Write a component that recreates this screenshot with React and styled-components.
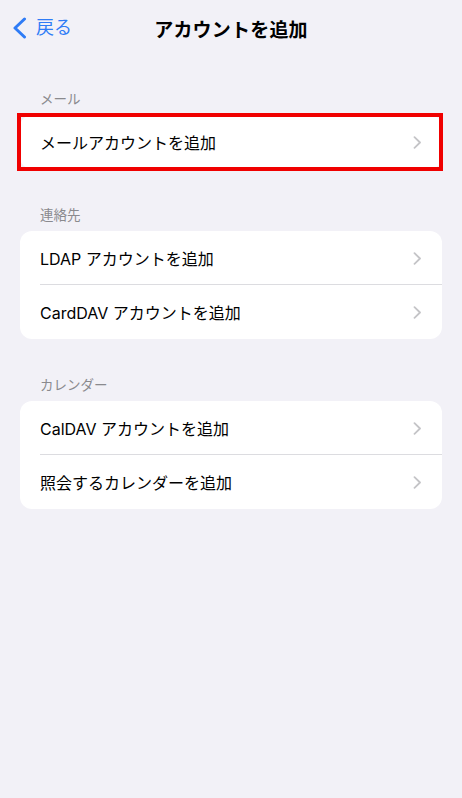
import React from 'react';
import styled, { createGlobalStyle } from 'styled-components';

const GlobalStyle = createGlobalStyle`
  html, body {
    margin: 0;
    padding: 0;
    background: #f2f1f7;
  }
  body {
    font-family: "Inter", "Noto Sans CJK JP", sans-serif;
    -webkit-font-smoothing: antialiased;
  }
`;

const Page = styled.div`
  min-height: 100vh;
  background: #f2f1f7;
`;

const NavBar = styled.div`
  height: 56px;
  display: grid;
  grid-template-columns: 1fr auto 1fr;
  align-items: center;
`;

const BackButton = styled.div`
  display: flex;
  align-items: center;
  gap: 9px;
  padding-left: 12px;
  color: #2f7cf6;
  font-size: 18px;
  line-height: 24px;
`;

const Title = styled.h1`
  margin: 0;
  font-size: 19px;
  font-weight: 700;
  color: #000;
  letter-spacing: 0.2px;
`;

const Content = styled.div`
  padding: 33px 20px 0;
`;

const Section = styled.section`
  & + & {
    margin-top: 36px;
  }
`;

const SectionLabel = styled.div`
  padding-left: 20px;
  margin-bottom: 6px;
  font-size: 13.5px;
  line-height: 20px;
  color: #8a8a8e;
`;

const Card = styled.div`
  position: relative;
  background: #fff;
  border-radius: 12px;
`;

const Highlight = styled.div`
  position: absolute;
  top: -2px;
  bottom: -2px;
  left: -3px;
  right: -1px;
  border: 4px solid #f00000;
  pointer-events: none;
`;

const Row = styled.div`
  height: 54px;
  padding-left: 20px;
  display: flex;
`;

const RowBody = styled.div`
  flex: 1;
  display: flex;
  align-items: center;
  justify-content: space-between;
  padding-right: 20px;
  border-top: ${p => (p.divider ? '1px solid #dcdce0' : 'none')};
  margin-top: ${p => (p.divider ? '-1px' : '0')};
`;

const RowText = styled.span`
  font-size: 16px;
  color: #000;
`;

const BackChevron = () => (
  <svg width="15" height="22" viewBox="0 0 15 22">
    <path d="M12.5 2 L3 11 L12.5 20" fill="none" stroke="#2f7cf6" strokeWidth="3" strokeLinecap="round" strokeLinejoin="round" />
  </svg>
);

const Chevron = () => (
  <svg width="9" height="13" viewBox="0 0 9 13">
    <path d="M1.5 1.2 L7 6.5 L1.5 11.8" fill="none" stroke="#c4c4c7" strokeWidth="1.8" strokeLinecap="round" strokeLinejoin="round" />
  </svg>
);

const sections = [
  { label: 'メール', highlighted: true, rows: ['メールアカウントを追加'] },
  { label: '連絡先', rows: ['LDAP アカウントを追加', 'CardDAV アカウントを追加'] },
  { label: 'カレンダー', rows: ['CalDAV アカウントを追加', '照会するカレンダーを追加'] },
];

const App = () => (
  <Page>
    <GlobalStyle />
    <NavBar>
      <BackButton>
        <BackChevron />
        <span>戻る</span>
      </BackButton>
      <Title>アカウントを追加</Title>
      <div />
    </NavBar>
    <Content>
      {sections.map(section => (
        <Section key={section.label}>
          <SectionLabel>{section.label}</SectionLabel>
          <Card>
            {section.rows.map((row, i) => (
              <Row key={row}>
                <RowBody divider={i > 0}>
                  <RowText>{row}</RowText>
                  <Chevron />
                </RowBody>
              </Row>
            ))}
            {section.highlighted && <Highlight />}
          </Card>
        </Section>
      ))}
    </Content>
  </Page>
);

export default App;
